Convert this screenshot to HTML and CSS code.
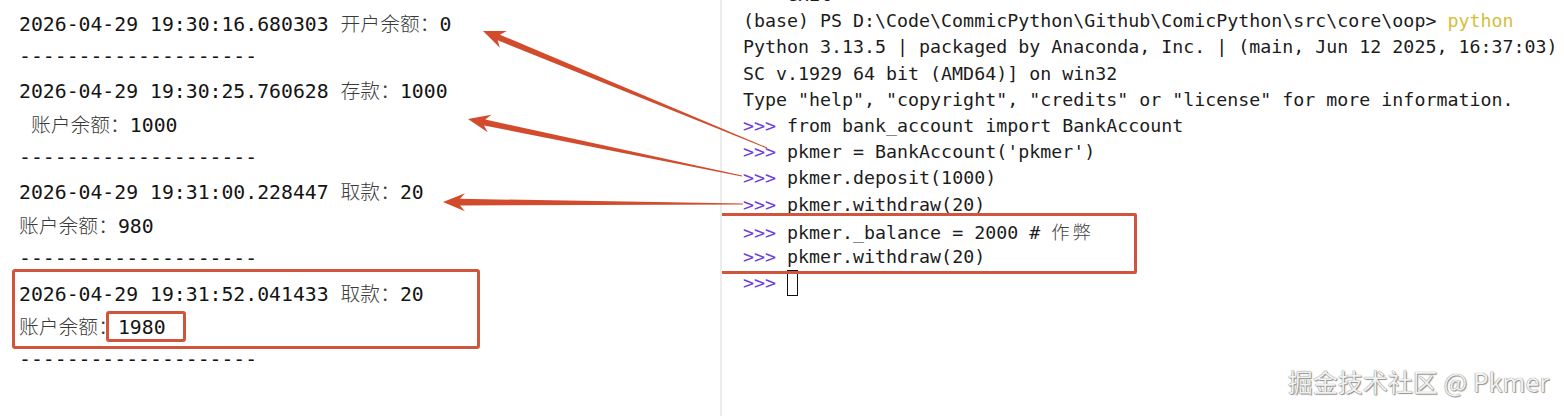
FILE: index.html
```html
<!DOCTYPE html>
<html lang="zh-CN">
<head>
<meta charset="utf-8">
<title>BankAccount demo</title>
<link rel="stylesheet" href="styles.css">
</head>
<body>
<div class="page">
  <section class="log">
    <div class="line">2026-04-29 19:30:16.680303 <span class="cn">开户余额：</span>0</div>
    <div class="line">--------------------</div>
    <div class="line">2026-04-29 19:30:25.760628 <span class="cn">存款：</span>1000</div>
    <div class="line"> <span class="cn">账户余额：</span>1000</div>
    <div class="line">--------------------</div>
    <div class="line">2026-04-29 19:31:00.228447 <span class="cn">取款：</span>20</div>
    <div class="line"><span class="cn">账户余额：</span>980</div>
    <div class="line">--------------------</div>
    <div class="hl-left">
      <div class="line">2026-04-29 19:31:52.041433 <span class="cn">取款：</span>20</div>
      <div class="line"><span class="cn">账户余额：</span><span class="num-box">1980</span></div>
    </div>
    <div class="line">--------------------</div>
  </section>
  <section class="term">
    <div class="term-body">
      <div class="tline">    exit</div>
      <div class="tline">(base) PS D:\Code\CommicPython\Github\ComicPython\src\core\oop&gt; <span class="cmd">python</span></div>
      <div class="tline">Python 3.13.5 | packaged by Anaconda, Inc. | (main, Jun 12 2025, 16:37:03)</div>
      <div class="tline">SC v.1929 64 bit (AMD64)] on win32</div>
      <div class="tline">Type "help", "copyright", "credits" or "license" for more information.</div>
      <div class="tline"><span class="ps">&gt;&gt;&gt;</span> from bank_account import BankAccount</div>
      <div class="tline"><span class="ps">&gt;&gt;&gt;</span> pkmer = BankAccount('pkmer')</div>
      <div class="tline"><span class="ps">&gt;&gt;&gt;</span> pkmer.deposit(1000)</div>
      <div class="tline"><span class="ps">&gt;&gt;&gt;</span> pkmer.withdraw(20)</div>
      <div class="hl-right">
        <div class="tline"><span class="ps">&gt;&gt;&gt;</span> pkmer._balance = 2000 # <span class="cn-t">作弊</span></div>
        <div class="tline"><span class="ps">&gt;&gt;&gt;</span> pkmer.withdraw(20)</div>
      </div>
      <div class="tline"><span class="ps">&gt;&gt;&gt;</span> <span class="cursor"></span></div>
    </div>
  </section>
</div>

<svg class="arrows" width="1564" height="416" viewBox="0 0 1564 416" aria-hidden="true">
  <polygon points="483,31 506.8,31.1 499.9,34.7 767.2,147.5 766.8,148.5 497.6,40.2 499.9,47.7"/>
  <polygon points="468,119 491.4,114.7 485.3,119.5 742.1,175.5 741.9,176.5 484.0,125.4 487.7,132.3"/>
  <polygon points="443,202 465.1,193.2 460,198.8 743,203.5 743,204.5 460,205.4 464.9,211.2"/>
</svg>

<div class="watermark">掘金技术社区 @ Pkmer</div>
</body>
</html>
```

FILE: styles.css
```css
html, body {
  margin: 0;
  padding: 0;
  background: #ffffff;
}

body {
  width: 1564px;
  height: 416px;
  overflow: hidden;
  position: relative;
  font-family: "DejaVu Sans Mono", "Noto Sans CJK SC", monospace;
}

.page {
  display: flex;
  height: 416px;
}

.log {
  width: 722px;
  border-right: 2px solid #ececec;
  padding: 6px 0 0 19px;
  box-sizing: border-box;
  flex: none;
  font-size: 19.8px;
  color: #141414;
}

.line {
  height: 33.7px;
  line-height: 33.7px;
  white-space: pre;
}

.cn {
  font-family: "Noto Sans CJK SC", sans-serif;
  color: #3a3a3a;
  font-weight: 300;
}

.hl-left {
  position: relative;
}

.hl-left::before {
  content: "";
  position: absolute;
  top: -7px;
  bottom: -6px;
  left: -7px;
  width: 468px;
  border: 3px solid #cf553c;
  border-radius: 3px;
  box-sizing: border-box;
}

.num-box {
  position: relative;
  display: inline-block;
}

.num-box::after {
  content: "";
  position: absolute;
  top: 0;
  bottom: 3px;
  left: -12px;
  right: -20px;
  border: 3px solid #cf553c;
  border-radius: 3px;
}

.term {
  flex: 1;
  padding-left: 21px;
  overflow: hidden;
  font-size: 18.3px;
  color: #1c1c1c;
}

.term-body {
  margin-top: -18px;
}

.tline {
  height: 26.2px;
  line-height: 26.2px;
  white-space: pre;
}

.ps {
  color: #6c40de;
}

.cmd {
  color: #d4c03a;
}

.cn-t {
  font-family: "Noto Sans CJK SC", sans-serif;
  color: #444;
  font-weight: 300;
  letter-spacing: 3px;
}

.hl-right {
  position: relative;
}

.hl-right::before {
  content: "";
  position: absolute;
  top: -5px;
  bottom: -4px;
  left: -32px;
  width: 426px;
  border: 3px solid #cf553c;
  border-radius: 2px;
  box-sizing: border-box;
}

.cursor {
  display: inline-block;
  width: 9px;
  height: 24px;
  border: 1px solid #111;
  vertical-align: top;
}

.arrows {
  position: absolute;
  top: 0;
  left: 0;
  pointer-events: none;
}

.arrows polygon {
  fill: #d24b2c;
}

.watermark {
  position: absolute;
  top: 365px;
  right: 15px;
  font-family: "Noto Sans CJK SC", sans-serif;
  font-size: 25px;
  line-height: 32px;
  color: #f2f2f2;
  text-shadow: 0 0 1px #555, 1px 1px 1px #999;
}
```
